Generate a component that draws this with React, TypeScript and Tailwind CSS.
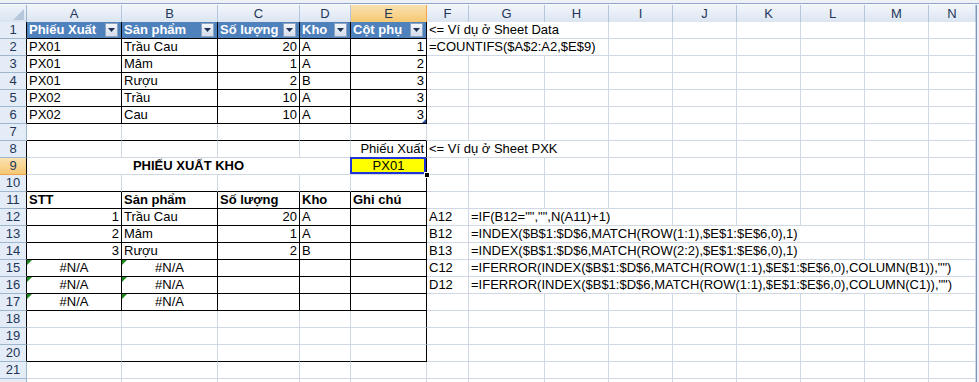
import React from 'react';

type Cell = {
  text?: string;
  align?: 'left' | 'right' | 'center';
  bold?: boolean;
  span?: number;
  kind?: 'tableHead' | 'input' | 'error';
};

const COLS = ['A', 'B', 'C', 'D', 'E', 'F', 'G', 'H', 'I', 'J', 'K', 'L', 'M', 'N'];
const ROW_COUNT = 22;
const ACTIVE_COL = 5;
const ACTIVE_ROW = 9;

const cells: Record<string, Cell> = {
  '1-1': { text: 'Phiếu Xuất', kind: 'tableHead' },
  '1-2': { text: 'Sản phẩm', kind: 'tableHead' },
  '1-3': { text: 'Số lượng', kind: 'tableHead' },
  '1-4': { text: 'Kho', kind: 'tableHead' },
  '1-5': { text: 'Cột phụ', kind: 'tableHead' },
  '1-6': { text: '<= Ví dụ ở Sheet Data', span: 3 },
  '2-6': { text: '=COUNTIFS($A$2:A2,$E$9)', span: 3 },
  '8-5': { text: 'Phiếu Xuất', align: 'right' },
  '8-6': { text: '<= Ví dụ ở Sheet PXK', span: 3 },
  '9-1': { text: 'PHIẾU XUẤT KHO', bold: true, align: 'center', span: 4 },
  '9-5': { text: 'PX01', align: 'center', kind: 'input' },
  '11-1': { text: 'STT', bold: true },
  '11-2': { text: 'Sản phẩm', bold: true },
  '11-3': { text: 'Số lượng', bold: true },
  '11-4': { text: 'Kho', bold: true },
  '11-5': { text: 'Ghi chú', bold: true },
  '12-6': { text: 'A12' },
  '12-7': { text: '=IF(B12="","",N(A11)+1)', span: 3 },
  '13-6': { text: 'B12' },
  '13-7': { text: '=INDEX($B$1:$D$6,MATCH(ROW(1:1),$E$1:$E$6,0),1)', span: 6 },
  '14-6': { text: 'B13' },
  '14-7': { text: '=INDEX($B$1:$D$6,MATCH(ROW(2:2),$E$1:$E$6,0),1)', span: 6 },
  '15-6': { text: 'C12' },
  '15-7': { text: '=IFERROR(INDEX($B$1:$D$6,MATCH(ROW(1:1),$E$1:$E$6,0),COLUMN(B1)),"")', span: 8 },
  '16-6': { text: 'D12' },
  '16-7': { text: '=IFERROR(INDEX($B$1:$D$6,MATCH(ROW(1:1),$E$1:$E$6,0),COLUMN(C1)),"")', span: 8 },
};

// sheet Data
const dataRows = [
  ['PX01', 'Trầu Cau', '20', 'A', '1'],
  ['PX01', 'Mâm', '1', 'A', '2'],
  ['PX01', 'Rượu', '2', 'B', '3'],
  ['PX02', 'Trầu', '10', 'A', '3'],
  ['PX02', 'Cau', '10', 'A', '3'],
];
dataRows.forEach((row, i) => {
  row.forEach((v, j) => {
    cells[`${i + 2}-${j + 1}`] = { text: v, align: j === 2 || j === 4 ? 'right' : 'left' };
  });
});

// phiếu xuất kho
const pxkRows = [
  ['1', 'Trầu Cau', '20', 'A'],
  ['2', 'Mâm', '1', 'A'],
  ['3', 'Rượu', '2', 'B'],
];
pxkRows.forEach((row, i) => {
  row.forEach((v, j) => {
    cells[`${i + 12}-${j + 1}`] = { text: v, align: j === 0 || j === 2 ? 'right' : 'left' };
  });
});
[15, 16, 17].forEach((r) => {
  cells[`${r}-1`] = { text: '#N/A', align: 'center', kind: 'error' };
  cells[`${r}-2`] = { text: '#N/A', align: 'center', kind: 'error' };
});

const edges = (r: number, c: number) => {
  const e = { top: false, left: false, right: false, bottom: false };
  if (c < 1 || c > 5) return e;
  if ((r >= 1 && r <= 6) || (r >= 11 && r <= 17)) {
    return { top: true, left: true, right: true, bottom: true };
  }
  if (r >= 8 && r <= 20) {
    e.top = r === 8;
    e.bottom = r === 20;
    e.left = c === 1;
    e.right = c === 5;
  }
  return e;
};

const DropButton = () => (
  <div className="absolute right-[3px] top-[1px] w-[13px] h-[14px] border border-[#8ea3c0] bg-gradient-to-b from-[#f3f6fb] to-[#d3dcea] flex items-center justify-center">
    <svg width="7" height="4" viewBox="0 0 7 4">
      <path d="M0 0H7L3.5 4Z" fill="#1f3356" />
    </svg>
  </div>
);

const SheetCell: React.FC<{ r: number; c: number; cell?: Cell }> = ({ r, c, cell }) => {
  const span = cell?.span ?? 1;
  const end = c + span - 1;
  const rightBlack = edges(r, end).right || edges(r, end + 1).left;
  const bottomBlack = edges(r, c).bottom || edges(r + 1, c).top;
  const align = cell?.align ?? 'left';
  const isHead = cell?.kind === 'tableHead';
  const isInput = cell?.kind === 'input';

  return (
    <div
      style={span > 1 ? { gridColumn: `span ${span} / span ${span}` } : undefined}
      className={[
        'relative flex h-[17px] border-r border-b px-[2px] whitespace-nowrap leading-[16px]',
        rightBlack ? 'border-r-black' : 'border-r-[#d0d7e5]',
        bottomBlack ? 'border-b-black' : 'border-b-[#d0d7e5]',
        align === 'right' ? 'justify-end' : align === 'center' ? 'justify-center' : 'justify-start',
        isHead ? 'bg-[#4f81bd] text-white font-bold' : isInput ? 'bg-[#ffff00] z-10' : 'bg-white',
        cell?.bold ? 'font-bold' : '',
      ].join(' ')}
    >
      {cell?.text}
      {isHead && <DropButton />}
      {cell?.kind === 'error' && (
        <span className="absolute left-0 top-0 w-0 h-0 border-t-[5px] border-t-[#1d8a1d] border-r-[5px] border-r-transparent" />
      )}
      {isInput && (
        <>
          <span className="absolute -left-px -top-px right-0 bottom-0 border-2 border-[#2035d8]" />
          <span className="absolute -right-[4px] -bottom-[4px] w-[6px] h-[6px] bg-black border border-white" />
        </>
      )}
      {r === 6 && c === 5 && (
        <span className="absolute right-0 bottom-0 w-0 h-0 border-b-[4px] border-b-[#1f4e9c] border-l-[4px] border-l-transparent" />
      )}
    </div>
  );
};

export default function App() {
  const rows = Array.from({ length: ROW_COUNT }, (_, i) => i + 1);

  return (
    <div className="w-[979px] h-[382px] overflow-hidden bg-white font-['Liberation_Sans',Arial,sans-serif] text-[13px] text-black">
      <div className="h-[3px] bg-[#eef2f8]" />
      <div className="h-px bg-[#8da6c8]" />
      <div className="h-px bg-[#f7f9fc]" />
      <div className="flex">
        <div className="grid grid-cols-[27px_95px_96px_82px_51px_76px_42px_76px_64px_64px_64px_64px_64px_64px_47px] auto-rows-[17px]">
          {/* select-all corner */}
          <div className="h-[18px] border-r border-b border-[#9eb6ce] bg-gradient-to-b from-[#eef3fa] to-[#d9e3f0] flex items-end justify-end p-[2px]">
            <svg width="11" height="11" viewBox="0 0 11 11">
              <path d="M11 0V11H0Z" fill="#b6c6db" />
            </svg>
          </div>
          {COLS.map((col, i) => (
            <div
              key={col}
              className={[
                'h-[18px] border-r border-b flex items-center justify-center text-[#1f365a] leading-[16px]',
                i + 1 === ACTIVE_COL
                  ? 'bg-gradient-to-b from-[#fae2b0] to-[#f5c872] border-r-[#f0a44a]'
                  : 'bg-gradient-to-b from-[#f2f6fb] to-[#dbe5f1] border-r-[#b4c6dc]',
                i < 5 ? 'border-b-black' : 'border-b-[#9eb6ce]',
              ].join(' ')}
            >
              {col}
            </div>
          ))}

          {rows.map((r) => {
            const out: React.ReactNode[] = [];
            out.push(
              <div
                key={`h-${r}`}
                className={[
                  'h-[17px] border-r border-b flex items-center justify-center text-[#1f365a] leading-[16px]',
                  r === ACTIVE_ROW
                    ? 'bg-gradient-to-b from-[#fae2b0] to-[#f5c872] border-b-[#f0a44a]'
                    : 'bg-[#e4ecf7] border-b-[#9eb6ce]',
                  edges(r, 1).left ? 'border-r-black' : 'border-r-[#9eb6ce]',
                ].join(' ')}
              >
                {r}
              </div>
            );
            let c = 1;
            while (c <= COLS.length) {
              const cell = cells[`${r}-${c}`];
              out.push(<SheetCell key={`${r}-${c}`} r={r} c={c} cell={cell} />);
              c += cell?.span ?? 1;
            }
            return out;
          })}
        </div>
        <div className="w-[3px] border-l border-l-[#7f97b8] bg-[#eef2f8]" />
      </div>
    </div>
  );
}
